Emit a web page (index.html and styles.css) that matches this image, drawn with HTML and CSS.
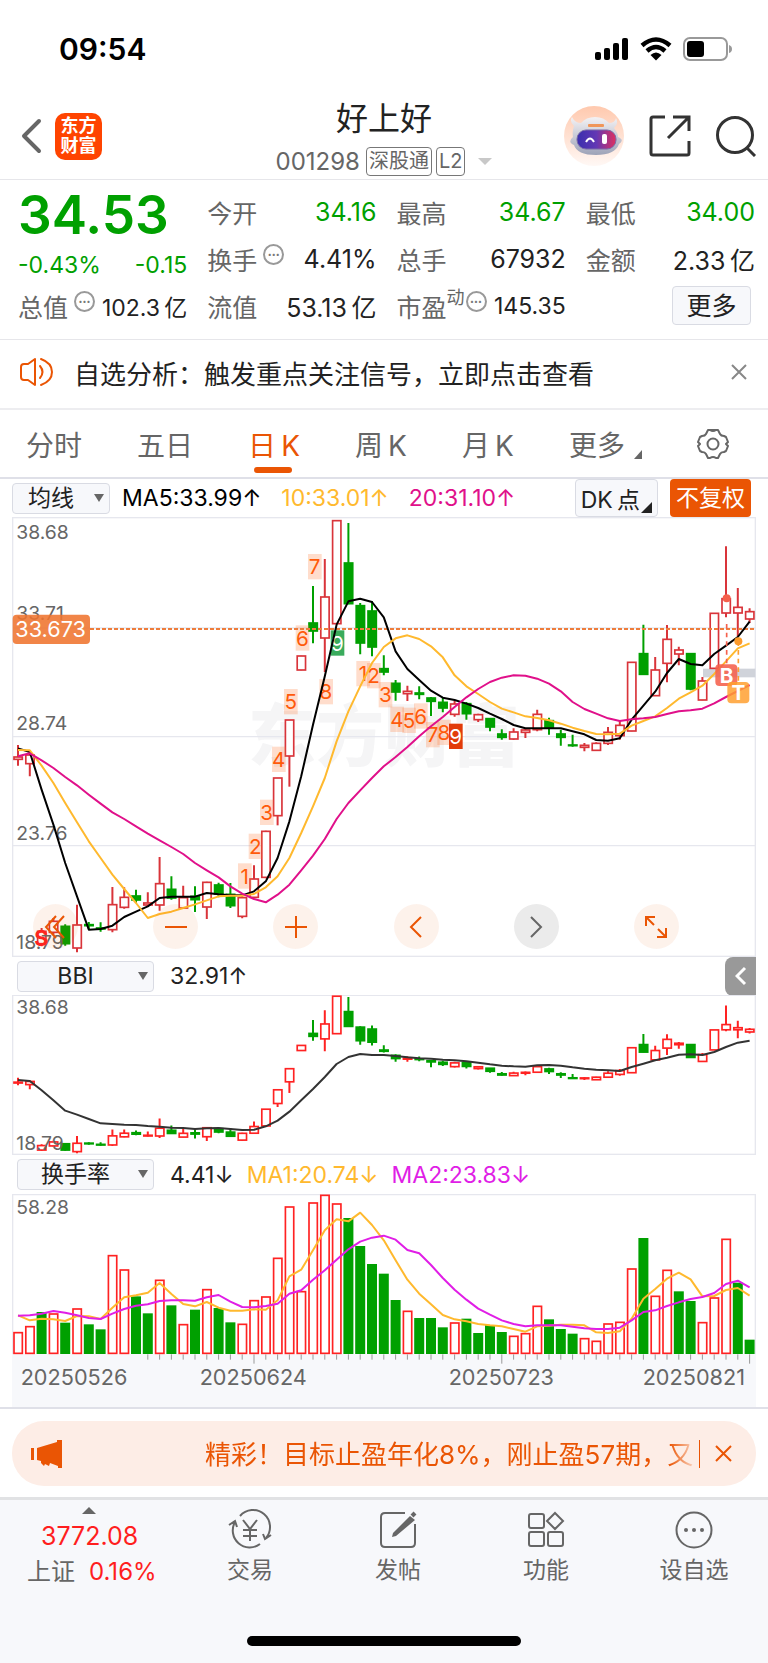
FILE: index.html
```html
<!DOCTYPE html>
<html lang="zh-CN">
<head>
    <meta charset="UTF-8">
    <meta name="viewport" content="width=device-width, initial-scale=1.0">
    <title>好上好 001298</title>
    <link rel="stylesheet" href="styles.css">
</head>
<body>

<div class="status-bar">
    <span class="time">09:54</span>
    <div class="status-icons">
        <svg width="34" height="24" viewBox="0 0 34 24"><rect x="0" y="15" width="6" height="8" rx="2"/><rect x="9" y="11" width="6" height="12" rx="2"/><rect x="18" y="6" width="6" height="17" rx="2"/><rect x="27" y="1" width="6" height="22" rx="2"/></svg>
        <svg width="32" height="24" viewBox="0 0 32 24"><g fill="none" stroke="#000" stroke-width="4.5"><path d="M2 8.500Q16 -3.500 30 8.500"/><path d="M7 14Q16 6 25 14"/></g><path d="M16 23.500L10.500 18Q16 13 21.500 18Z"/></svg>
        <svg width="50" height="24" viewBox="0 0 50 24"><rect x="1" y="1" width="43" height="22" rx="6" fill="none" stroke="#999" stroke-width="2"/><rect x="4" y="4" width="17" height="16" rx="3"/><path d="M46 8Q49 9 49 12T46 16Z" fill="#999"/></svg>
    </div>
</div>

<header class="header">
    <div class="header-left">
        <button class="icon-btn" aria-label="返回"><svg width="22" height="38" viewBox="0 0 22 38" fill="none" stroke="#666" stroke-width="4" stroke-linecap="round" stroke-linejoin="round"><path d="M19 4L4 19L19 34"/></svg></button>
        <a href="#" class="logo">东方<br>财富</a>
    </div>
    <div class="header-title">
        <h1>好上好</h1>
        <div class="code"><span>001298</span><span class="tag">深股通</span><span class="tag">L2</span><i class="tri-down"></i></div>
    </div>
    <div class="header-right">
        <button class="icon-btn" aria-label="智能助手">
            <svg width="60" height="60" viewBox="0 0 60 60">
                <defs>
                    <linearGradient id="halo" x1="0" y1="0" x2="0" y2="1"><stop offset="0" stop-color="#ffc9ae"/><stop offset="1" stop-color="#fff8f5"/></linearGradient>
                    <linearGradient id="face" x1="0" y1="0" x2="1" y2="0"><stop offset="0" stop-color="#3a2fae"/><stop offset=".5" stop-color="#6338b4"/><stop offset="1" stop-color="#e0305e"/></linearGradient>
                    <linearGradient id="head" x1="0" y1="0" x2="0" y2="1"><stop offset="0" stop-color="#f4f2f4"/><stop offset="1" stop-color="#9da3b8"/></linearGradient>
                </defs>
                <circle cx="30" cy="30" r="30" fill="url(#halo)"/>
                <path d="M10 20Q5 15 8 11Q11 17 17 17Q22 11 31 11Q40 11 45 17Q51 17 52 12Q55 18 50 22Q54 27 54 31Q61 34 55 38Q51 49 32 49Q13 49 10 39Q3 36 9 31Q8 25 10 20Z" fill="url(#head)"/>
                <rect x="13" y="24" width="39" height="19" rx="9" fill="url(#face)" stroke="#7a6ba8"/>
                <rect x="24" y="18" width="16" height="3" rx="1" fill="#f0965a"/>
                <path d="M22 36Q26 29 30 36" fill="none" stroke="#fff" stroke-width="2"/><rect x="38" y="28" width="5" height="10" rx="2" fill="#fff"/>
            </svg>
        </button>
        <button class="icon-btn" aria-label="分享"><svg width="42" height="42" viewBox="0 0 42 42" fill="none" stroke="#333" stroke-width="3"><path d="M16 2H4Q2 2 2 4V38Q2 40 4 40H38Q40 40 40 38V26M24 2H40V16M40 2L19 23"/></svg></button>
        <button class="icon-btn" aria-label="搜索"><svg width="42" height="42" viewBox="0 0 42 42" fill="none" stroke="#333" stroke-width="3"><circle cx="19" cy="20" r="17.500"/><path d="M31 33L39 41"/></svg></button>
    </div>
</header>

<section class="quote">
    <div class="price">34.53</div>
    <div class="cell"><label>今开</label><b class="green">34.16</b></div>
    <div class="cell"><label>最高</label><b class="green">34.67</b></div>
    <div class="cell"><label>最低</label><b class="green">34.00</b></div>

    <div class="cell change"><b class="green">-0.43%</b><b class="green">-0.15</b></div>
    <div class="cell"><label>换手<i class="dots">•••</i></label><b>4.41%</b></div>
    <div class="cell"><label>总手</label><b>67932</b></div>
    <div class="cell"><label>金额</label><b>2.33&thinsp;亿</b></div>

    <div class="cell"><label>总值<i class="dots">•••</i></label><b class="small">102.3&thinsp;亿</b></div>
    <div class="cell"><label>流值</label><b>53.13&thinsp;亿</b></div>
    <div class="cell"><label>市盈<sup>动</sup><i class="dots">•••</i></label><b class="small">145.35</b></div>
    <div class="cell cell-more"><button class="more-btn">更多</button></div>
</section>

<section class="notice">
    <svg width="34" height="30" viewBox="0 0 34 30" fill="none" stroke="#ea5504" stroke-width="2" stroke-linejoin="round" stroke-linecap="round"><path d="M15 2L8 7H4Q1 7 1 10V20Q1 23 4 23H8L15 28ZM20 9Q25 15 20 21M21 2Q32 6 32 15T21 28"/></svg>
    <a href="#">自选分析：触发重点关注信号，立即点击查看</a>
    <button class="icon-btn" aria-label="关闭"><svg width="16" height="16" viewBox="0 0 16 16" stroke="#888" stroke-width="2"><path d="M1 1L15 15M15 1L1 15"/></svg></button>
</section>

<nav class="tabs">
    <button>分时</button>
    <button>五日</button>
    <button class="active">日&thinsp;K</button>
    <button>周&thinsp;K</button>
    <button>月&thinsp;K</button>
    <button>更多<i class="corner"></i></button>
    <button aria-label="设置"><svg width="32" height="32" viewBox="0 0 32 32" fill="none" stroke="#666" stroke-width="2" stroke-linejoin="round"><path d="M11 2H21L23 6Q24 8 27 8L29 9L31 14L29 16L31 18L29 23L27 24Q24 24 23 26L21 30H19Q16 28 13 30H11L9 26Q8 24 5 24L3 23L1 18L3 16L1 14L3 9L5 8Q8 8 9 6L11 2H13Q16 4 19 2"/><circle cx="16" cy="16" r="5.500"/></svg></button>
</nav>

<main class="charts">
    <div class="bar bar-main">
        <span class="select"><select aria-label="主图指标"><option>均线</option></select></span>
        <span class="ma5">MA5:33.99↑</span>
        <span class="ma10">10:33.01↑</span>
        <span class="ma20">20:31.10↑</span>
        <button class="dk-btn">DK&thinsp;点<i class="corner"></i></button>
        <button class="adjust-btn">不复权</button>
    </div>

    <div class="chart-wrap">
        <svg id="kline" class="chart" viewBox="36 22 2232 1320"></svg>
        <div class="controls">
            <button aria-label="最左"><svg viewBox="0 0 24 24"><path d="M12 1L2 12L12 23M20 1L10 12L20 23"/></svg></button>
            <button aria-label="缩小"><svg viewBox="0 0 24 24"><path d="M1 12H23"/></svg></button>
            <button aria-label="放大"><svg viewBox="0 0 24 24"><path d="M1 12H23M12 1V23"/></svg></button>
            <button aria-label="左移"><svg viewBox="0 0 24 24"><path d="M17 2L7 12L17 22"/></svg></button>
            <button aria-label="右移" class="gray"><svg viewBox="0 0 24 24"><path d="M7 2L17 12L7 22"/></svg></button>
            <button aria-label="全屏"><svg viewBox="0 0 24 24"><path d="M2 11V2H11M2 2L10 10M22 13V22H13M22 22L14 14"/></svg></button>
        </div>
    </div>

    <div class="bar">
        <span class="select wide"><select aria-label="副图指标一"><option>BBI</option></select></span>
        <span>32.91↑</span>
        <button class="fold-btn" aria-label="展开"><svg width="12" height="20" viewBox="0 0 12 20" fill="none" stroke="#fff" stroke-width="3"><path d="M10 2L2 10L10 18"/></svg></button>
    </div>
    <svg id="bbi" class="chart" viewBox="36 136 2232 480"></svg>

    <div class="bar bar-volume">
        <span class="select wide"><select aria-label="副图指标二"><option>换手率</option></select></span>
        <span>4.41↓</span>
        <span class="ma10">MA1:20.74↓</span>
        <span class="violet">MA2:23.83↓</span>
    </div>
    <svg id="volume" class="chart" viewBox="36 41 2232 639"></svg>
</main>

<section class="promo">
    <div class="promo-inner">
        <svg width="32" height="28" viewBox="0 0 32 28" fill="#ea5504"><path d="M0 8H3V20H0ZM6 8L26 2V0H31V28H27V26L19 23L18 26L14 24L13 26L10 23V21L6 20Z"/></svg>
        <a href="#">精彩！目标止盈年化8%，刚止盈57期，又</a>
        <button class="icon-btn" aria-label="关闭"><svg width="17" height="17" viewBox="0 0 17 17" stroke="#ea5504" stroke-width="2"><path d="M1 1L16 16M16 1L1 16"/></svg></button>
    </div>
</section>

<footer class="footer">
    <nav class="bottom-nav">
        <a href="#" class="index">
            <i class="tri-up"></i>
            <span class="red">3772.08</span>
            <span class="index-row">上证<span class="red">0.16%</span></span>
        </a>
        <a href="#">
            <svg width="42" height="38" viewBox="0 0 42 38"><path d="M11 5A17 17 0 0 1 37 27M31 33A17 17 0 0 1 6 11M0 14L6 10L8 16M42 24L36 28L34 23M14 9L21 18L28 9M14 19H28M14 25H28M21 18V30"/></svg>
            <span>交易</span>
        </a>
        <a href="#">
            <svg width="38" height="38" viewBox="0 0 38 38"><path d="M26 2H6Q2 2 2 6V32Q2 36 6 36H32Q36 36 36 32V13"/><path d="M31 5L36 9L17 25L13 26L14 22Z" fill="#666" stroke="none"/><path d="M33 5L36 2" stroke-width="4"/></svg>
            <span>发帖</span>
        </a>
        <a href="#">
            <svg width="36" height="36" viewBox="0 0 36 36"><rect x="1" y="2" width="15" height="14" rx="2"/><rect x="1" y="20" width="15" height="14" rx="2"/><rect x="20" y="20" width="15" height="14" rx="2"/><path d="M27 1L35 9L27 17L19 9Z"/></svg>
            <span>功能</span>
        </a>
        <a href="#">
            <svg width="38" height="38" viewBox="0 0 38 38"><circle cx="19" cy="19" r="17.500"/><g fill="#666" stroke="none"><circle cx="11" cy="19" r="2"/><circle cx="19" cy="19" r="2"/><circle cx="27" cy="19" r="2"/></g></svg>
            <span>设自选</span>
        </a>
    </nav>
    <div class="home-bar"></div>
</footer>

<script src="chart.js"></script>
</body>
</html>
```
FILE: styles.css
```css
* {
    box-sizing: border-box;
}
body {
    margin: 0;
    font-family: Inter, "Noto Sans CJK SC", sans-serif;
    font-size: 25px;
    color: #222;
    background-color: #fff;
}
button {
    border: none;
    background: none;
    padding: 0;
    margin: 0;
    font: inherit;
    color: inherit;
    cursor: pointer;
}
a {
    color: inherit;
    text-decoration: none;
}
i {
    font-style: normal;
}
svg {
    display: block;
    flex: none;
}
.icon-btn {
    display: flex;
    align-items: center;
    justify-content: center;
}

/* status bar */
.status-bar {
    display: flex;
    justify-content: space-between;
    align-items: center;
    height: 98px;
    padding: 0 35px 0 59px;
}
.time {
    font-size: 30px;
    font-weight: 600;
    color: #000;
}
.status-icons {
    display: flex;
    gap: 11px;
}

/* header */
.header {
    display: grid;
    grid-template-columns: 1fr auto 1fr;
    height: 82px;
    padding: 0 10px;
    border-bottom: 1px solid #e6e6ea;
}
.header-left {
    display: flex;
    align-items: center;
    gap: 13px;
    height: 76px;
    padding-left: 10px;
}
.logo {
    width: 47px;
    height: 47px;
    padding-top: 3px;
    border-radius: 10px;
    background-color: #ff4400;
    color: #fff;
    font-size: 18px;
    font-weight: 700;
    line-height: 20px;
    text-align: center;
}
.header-title {
    text-align: center;
}
.header-title h1 {
    margin: 0;
    font-size: 32px;
    font-weight: 400;
    line-height: 42px;
}
.code {
    display: flex;
    align-items: center;
    gap: 4px;
    height: 42px;
    color: #666;
    font-size: 24px;
}
.tag {
    height: 29px;
    padding: 0 2px;
    border: 1px solid #777;
    border-radius: 4px;
    font-size: 20px;
    line-height: 27px;
}
.code .tag:nth-child(2) {
    margin-left: 2px;
}
.tri-down {
    margin-left: 9px;
    border: 7px solid transparent;
    border-top-color: #c8c8c8;
    border-bottom: none;
}
.header-right {
    display: flex;
    justify-content: flex-end;
    align-items: center;
    gap: 25px;
    height: 76px;
}

/* quote panel */
.quote {
    display: grid;
    grid-template-columns: repeat(4, 1fr);
    grid-auto-rows: 47px;
    column-gap: 20px;
    height: 160px;
    padding: 8px 13px 0 18px;
    border-bottom: 1px solid #e6e6ea;
}
.price {
    font-size: 53px;
    font-weight: 600;
    line-height: 54px;
    color: #00a000;
}
.cell {
    display: flex;
    justify-content: space-between;
    align-items: center;
    white-space: nowrap;
}
.cell label {
    display: flex;
    color: #666;
}
.cell b {
    font-weight: 400;
}
.cell b.small {
    font-size: 23px;
}
.cell sup {
    font-size: 18px;
    line-height: 20px;
}
.cell b.green {
    color: #00a000;
}
.change {
    font-size: 23px;
    padding-top: 12px;
}
.dots {
    align-self: flex-start;
    width: 21px;
    height: 21px;
    margin: 3px 0 0 6px;
    border: 2px solid #999;
    border-radius: 50%;
    color: #777;
    font-size: 7px;
    line-height: 17px;
    text-align: center;
}
sup + .dots {
    margin-left: 1px;
}
.cell-more {
    justify-content: flex-end;
}
.more-btn {
    width: 79px;
    height: 39px;
    margin-right: 4px;
    border: 1px solid #d9dbe3;
    border-radius: 4px;
    background-color: #f7f8fb;
    line-height: 30px;
}

/* notice */
.notice {
    display: flex;
    align-items: center;
    gap: 20px;
    height: 70px;
    padding: 0 21px 4px 20px;
    border-bottom: 2px solid #ededf0;
    font-size: 26px;
}
.notice a {
    flex: 1;
}

/* period tabs */
.tabs {
    display: flex;
    justify-content: space-between;
    height: 69px;
    padding: 0 39px 0 26px;
    border-bottom: 2px solid #dfe0e8;
    font-size: 28px;
    color: #666;
}
.tabs button {
    position: relative;
    display: flex;
    align-items: center;
    gap: 3px;
}
.tabs .active {
    color: #ea5504;
}
.tabs .active::after {
    content: "";
    position: absolute;
    left: 50%;
    bottom: 4px;
    width: 38px;
    height: 6px;
    margin-left: -20px;
    border-radius: 3px;
    background-color: #ea5504;
}
.corner {
    align-self: flex-end;
    border-left: 8px solid transparent;
    border-bottom: 9px solid currentColor;
}
.tabs .corner {
    margin: 0 0 18px 6px;
}

/* charts */
.charts {
    padding: 0 12px;
}
.bar {
    display: flex;
    align-items: center;
    gap: 16px;
    height: 38px;
    padding-left: 5px;
    font-size: 23px;
}
.bar-main {
    padding: 0 5px 0 0;
    gap: 12px;
}
.bar-main .ma10,
.bar-main .ma20 {
    margin-left: 8px;
}
.bar-volume {
    height: 39px;
    gap: 13px;
}
.bar-volume .select {
    margin-right: 3px;
}
.select {
    position: relative;
    width: 98px;
    height: 31px;
}
.select.wide {
    width: 137px;
}
.select select {
    appearance: none;
    width: 100%;
    height: 100%;
    padding: 0 20px 0 0;
    border: 1px solid #d9dbe3;
    border-radius: 4px;
    background-color: #f7f8fb;
    color: #222;
    font: inherit;
    line-height: 27px;
    text-align: center;
    text-align-last: center;
}
.select::after {
    content: "";
    position: absolute;
    right: 6px;
    top: 11px;
    border: 5px solid transparent;
    border-top: 8px solid #666;
    border-bottom: none;
}
.ma5 {
    color: #000;
}
.ma10 {
    color: #ffb92e;
}
.ma20 {
    color: #e0108a;
}
.violet {
    color: #e01ee6;
}
.dk-btn {
    display: flex;
    align-items: center;
    gap: 1px;
    height: 38px;
    margin-left: auto;
    padding: 0 5px;
    border: 1px solid #d9dbe3;
    border-radius: 4px;
    background-color: #f7f8fb;
}
.dk-btn .corner {
    margin-bottom: 3px;
    border-width: 0 0 11px 11px;
}
.adjust-btn {
    height: 38px;
    padding: 0 6px;
    border-radius: 4px;
    background-color: #ea5504;
    color: #fff;
    line-height: 38px;
}
.chart-wrap {
    position: relative;
}
.chart {
    width: 100%;
    height: auto;
}
.controls {
    position: absolute;
    left: 21px;
    right: 77px;
    bottom: 8px;
    display: flex;
    justify-content: space-between;
}
.controls button {
    display: flex;
    align-items: center;
    justify-content: center;
    width: 45px;
    height: 45px;
    border-radius: 50%;
    background-color: rgba(234, 85, 4, 0.08);
}
.controls svg {
    width: 24px;
    height: 24px;
    fill: none;
    stroke: #ea5504;
    stroke-width: 2;
}
.controls .gray {
    background-color: #ebebeb;
}
.controls .gray svg {
    stroke: #666;
}
.fold-btn {
    display: flex;
    align-items: center;
    justify-content: center;
    width: 31px;
    height: 39px;
    margin-left: auto;
    border-radius: 8px 0 0 8px;
    background-color: #999;
}

/* chart parts */
.frame {
    fill: none;
    stroke: #e6e7ee;
    stroke-width: 4;
}
.axis-bg {
    fill: #f7f8fb;
}
.tick {
    stroke: #999;
    stroke-width: 3;
}
.axis {
    fill: #666;
    font-size: 58px;
}
.date {
    fill: #666;
    font-size: 65px;
}
.watermark {
    fill: #f5f5f6;
    font-size: 204px;
    font-weight: 900;
    text-anchor: middle;
}
.line {
    fill: none;
    stroke-width: 6;
    stroke-linejoin: round;
}
.mark {
    fill: #ff5a0a;
    font-size: 62px;
    text-anchor: middle;
}
.mark.white {
    fill: #fff;
}
.badge {
    fill: #fff;
    font-size: 62px;
    font-weight: 700;
    text-anchor: middle;
}
.sell {
    fill: #ff2222;
    font-size: 64px;
    font-weight: 700;
    text-anchor: middle;
}
.cost {
    fill: #fff;
    font-size: 65px;
}

/* promo strip */
.promo {
    padding: 12px 12px 11px;
    border-top: 2px solid #dfe0e8;
    border-bottom: 3px solid #e1e2e4;
}
.promo-inner {
    display: flex;
    align-items: center;
    height: 65px;
    padding: 0 24px 0 19px;
    border-radius: 32px;
    background-color: #fdede6;
    color: #ea5504;
    font-size: 26px;
}
.promo-inner a {
    flex: 1;
    margin-left: 142px;
    padding-bottom: 2px;
    overflow: hidden;
    white-space: nowrap;
    -webkit-mask-image: linear-gradient(to right, #000 94%, transparent);
    mask-image: linear-gradient(to right, #000 94%, transparent);
}
.promo-inner button {
    height: 28px;
    padding-left: 15px;
    border-left: 1px solid #ea5504;
}

/* bottom navigation */
.footer {
    height: 163px;
    background-color: #f7f8fb;
    color: #666;
}
.bottom-nav {
    display: grid;
    grid-template-columns: 176px repeat(4, 1fr);
    height: 136px;
}
.bottom-nav a {
    display: flex;
    flex-direction: column;
    align-items: center;
    padding-top: 11px;
    font-size: 23px;
    line-height: 40px;
}
.bottom-nav svg {
    height: 38px;
    margin-bottom: 1px;
    overflow: visible;
    fill: none;
    stroke: #666;
    stroke-width: 2;
}
.bottom-nav .index {
    padding: 7px 0 0 14px;
    font-size: 25px;
    line-height: 35px;
    align-items: flex-start;
}
.bottom-nav .index > * {
    margin-left: 27px;
}
.bottom-nav .tri-up {
    margin: 0 0 5px 68px;
    border: 7px solid transparent;
    border-bottom-color: #666;
    border-top: none;
}
.bottom-nav .index-row {
    display: flex;
    gap: 14px;
    margin-left: 13px;
    font-size: 24px;
}
.red {
    color: #ff1e1e;
}
.home-bar {
    width: 274px;
    height: 10px;
    margin: 0 auto;
    border-radius: 5px;
    background-color: #000;
}
```
FILE: chart.js
```js
var GREEN = "#00a000";
var STEP = 35.4;

// high, body top, body bottom, low, 1 = up
var candles = [
    [706, 742, 749, 768, 1], [728, 736, 762, 800, 1], [1255, 1265, 1302, 1310, 1], [1225, 1235, 1268, 1275, 1],
    [1244, 1250, 1302, 1308, 0], [1185, 1246, 1315, 1328, 1], [1237, 1245, 1248, 1258, 0], [1238, 1255, 1258, 1266, 0],
    [1132, 1185, 1260, 1268, 1], [1133, 1163, 1193, 1197, 1], [1140, 1159, 1171, 1180, 0], [1148, 1180, 1186, 1190, 1],
    [1042, 1122, 1186, 1203, 1], [1100, 1139, 1165, 1170, 0], [1128, 1164, 1195, 1197, 1], [1130, 1160, 1170, 1207, 0],
    [1116, 1118, 1192, 1228, 1], [1119, 1126, 1153, 1163, 0], [1120, 1154, 1188, 1195, 0], [1160, 1164, 1220, 1226, 1],
    [1067, 1108, 1163, 1166, 1], [963, 965, 1103, 1106, 1], [805, 805, 918, 947, 1], [631, 631, 739, 831, 1],
    [438, 439, 481, 482, 1], [229, 340, 364, 401, 0], [148, 262, 385, 487, 1], [33, 33, 342, 342, 1],
    [40, 160, 282, 284, 0], [280, 288, 400, 434, 0], [274, 304, 412, 440, 0], [437, 477, 487, 497, 0],
    [511, 521, 547, 573, 0], [528, 545, 552, 574, 1], [530, 550, 554, 569, 0], [562, 565, 575, 619, 0],
    [565, 578, 595, 608, 0], [574, 583, 614, 621, 1], [577, 582, 612, 630, 0], [612, 615, 630, 637, 1],
    [625, 627, 652, 665, 0], [659, 673, 683, 690, 0], [656, 667, 688, 690, 1], [655, 661, 668, 685, 1],
    [600, 614, 660, 665, 1], [624, 633, 654, 675, 0], [660, 673, 683, 708, 0], [675, 706, 708, 711, 0],
    [700, 707, 713, 725, 1], [698, 701, 722, 724, 1], [652, 668, 701, 706, 1], [634, 647, 678, 690, 1],
    [457, 458, 664, 665, 1], [345, 432, 494, 496, 0], [442, 481, 558, 559, 1], [346, 389, 461, 518, 1],
    [411, 421, 433, 467, 1], [430, 432, 538, 542, 0], [502, 514, 571, 572, 1], [311, 311, 476, 476, 1],
    [110, 267, 310, 323, 1], [235, 293, 310, 380, 1], [296, 306, 328, 340, 1]
];
var ma5 = [716, 727, 840, 945, 1060, 1160, 1260, 1258, 1248, 1222, 1206, 1190, 1165, 1161, 1161, 1161, 1150, 1154, 1157, 1157, 1145, 1115, 1045, 935, 800, 645, 500, 345, 275, 267, 277, 323, 425, 478, 511, 543, 564, 571, 582, 595, 612, 628, 646, 656, 656, 656, 656, 665, 674, 691, 693, 686, 630, 588, 546, 490, 448, 463, 467, 433, 408, 382, 336];
var ma10 = [721, 722, 768, 820, 880, 938, 995, 1045, 1095, 1138, 1180, 1225, 1213, 1206, 1195, 1184, 1172, 1160, 1158, 1158, 1153, 1133, 1100, 1045, 970, 890, 805, 695, 605, 530, 460, 412, 386, 377, 388, 410, 443, 497, 530, 553, 577, 597, 608, 620, 625, 632, 642, 654, 664, 673, 674, 672, 648, 634, 620, 595, 567, 548, 528, 493, 455, 416, 401];
var ma20 = [740, 731, 752, 775, 802, 827, 855, 882, 908, 928, 950, 972, 992, 1012, 1033, 1060, 1082, 1103, 1130, 1152, 1168, 1178, 1155, 1125, 1082, 1038, 988, 928, 880, 842, 805, 770, 742, 712, 680, 650, 622, 592, 563, 538, 517, 504, 497, 498, 507, 522, 545, 577, 598, 612, 626, 634, 629, 626, 622, 613, 605, 602, 597, 581, 562, 544, 526];
var bbi = [391, 394, 422, 452, 483, 495, 508, 521, 523, 525, 526, 529, 531, 534, 535, 538, 536, 535, 538, 541, 540, 530, 513, 486, 452, 418, 382, 343, 322, 313, 316, 316, 319, 323, 326, 327, 330, 332, 335, 339, 344, 348, 350, 351, 347, 346, 348, 353, 357, 360, 362, 364, 352, 342, 332, 324, 315, 314, 316, 307, 292, 279, 273];

var volume = [456, 438, 396, 400, 428, 385, 433, 448, 225, 268, 349, 400, 299, 376, 432, 389, 327, 384, 427, 431, 360, 349, 233, 79, 333, 67, 44, 70, 114, 198, 252, 281, 360, 392, 414, 414, 442, 427, 416, 459, 435, 456, 467, 459, 377, 418, 447, 461, 474, 482, 430, 425, 265, 174, 347, 269, 334, 363, 426, 352, 176, 308, 479];
var volumeUp = "110101001100101010011111111100000100010000111000111110110011100";
var volMa1 = [405, 420, 415, 417, 422, 407, 408, 416, 382, 351, 345, 337, 308, 341, 371, 378, 365, 382, 391, 391, 387, 388, 360, 288, 268, 210, 150, 117, 123, 97, 134, 180, 240, 298, 340, 372, 404, 417, 423, 431, 435, 438, 446, 454, 438, 436, 433, 433, 435, 456, 458, 453, 415, 355, 326, 295, 277, 297, 348, 347, 329, 323, 346];
var volMa2 = [406, 405, 400, 392, 397, 405, 413, 416, 400, 386, 376, 372, 362, 360, 360, 361, 351, 344, 364, 380, 381, 377, 370, 340, 330, 298, 270, 238, 207, 184, 172, 166, 178, 209, 219, 254, 293, 328, 358, 385, 403, 420, 431, 438, 435, 435, 435, 439, 444, 446, 446, 442, 420, 395, 390, 377, 366, 356, 350, 338, 311, 301, 321];

// x, y, text, background
var marks = [
    [714, 1061, 1], [746, 972, 2], [780, 870, 3], [816, 711, 4], [852, 538, 5], [887, 347, 6], [924, 133, 7], [958, 508, 8], [992, 362, 9, "#3aab5c"],
    [1069, 454, 1], [1101, 460, 2], [1136, 517, 3], [1171, 591, 4], [1207, 594, 5], [1242, 581, 6], [1278, 637, 7], [1312, 630, 8], [1347, 642, 9, "#e23c0a"]
];

function posX(i) {
    return 54 + STEP * i;
}

function rect(x, y, w, h, attrs) {
    return `<rect x="${x}" y="${y}" width="${w}" height="${h}" ${attrs}/>`;
}

function hLine(y) {
    return `<path class="frame" d="M38 ${y}H2266"/>`;
}

function text(x, y, cls, str) {
    return `<text x="${x}" y="${y}" class="${cls}">${str}</text>`;
}

function polyline(values, color) {
    var points = values.map((y, i) => posX(i) + "," + y).join(" ");
    return `<polyline class="line" stroke="${color}" points="${points}"/>`;
}

function drawCandles(red, scale) {
    var out = "";
    candles.forEach(function (c, i) {
        var x = posX(i);
        var y = c.slice(0, 4).map(scale);
        var color = c[4] ? red : GREEN;
        out += `<path d="M${x} ${y[0]}V${y[1]}M${x} ${y[2]}V${y[3]}" stroke="${color}" stroke-width="6"/>`;
        out += rect(x - 12, y[1], 25, Math.max(y[2] - y[1], 2), `fill="${c[4] ? "#fff" : color}" stroke="${color}" stroke-width="5"`);
    });
    return out;
}

function drawKline() {
    var out = text(1152, 755, "watermark", "东方财富");
    out += rect(38, 24, 2228, 1316, 'class="frame"') + hLine(355) + hLine(681) + hLine(1008);
    out += rect(2109, 477, 157, 26, 'fill="#d0d3da"');
    out += drawCandles("#d9343a", y => y);
    out += text(49, 88, "axis", "38.68") + text(49, 332, "axis", "33.71") + text(49, 662, "axis", "28.74");
    out += text(49, 991, "axis", "23.76") + text(49, 1318, "axis", "18.79");
    marks.forEach(function (m) {
        out += rect(m[0], m[1], 41, 76, `fill="${m[3] || "rgba(255,120,50,.25)"}"`);
        out += text(m[0] + 20, m[1] + 61, m[3] ? "mark white" : "mark", m[2]);
    });
    out += '<path d="M270 358H2266" stroke="#ee7d3c" stroke-width="6" stroke-dasharray="12 6"/>';
    out += polyline(ma5, "#000") + polyline(ma10, "#ffb92e") + polyline(ma20, "#e0108a");
    out += rect(38, 315, 232, 88, 'rx="12" fill="#ef742f" fill-opacity=".88"') + text(46, 383, "cost", "33.673");
    out += text(124, 1309, "sell", "S");
    // trade points
    out += '<path d="M2180 343V464" stroke="#f5604c" stroke-width="5" stroke-dasharray="14 12"/>';
    out += '<path d="M2215 395V517" stroke="#ffa030" stroke-width="5" stroke-dasharray="14 12"/>';
    out += '<circle cx="2180" cy="266" r="12" fill="#f5604c"/><circle cx="2215" cy="395" r="12" fill="#fb9a2c"/>';
    out += rect(2146, 464, 66, 65, 'rx="12" fill="#f5604c" fill-opacity=".88"') + text(2180, 519, "badge", "B");
    out += rect(2182, 517, 66, 64, 'rx="12" fill="#ffa030" fill-opacity=".85"') + text(2215, 572, "badge", "T");
    document.getElementById("kline").innerHTML = out;
}

function drawBbi() {
    var out = rect(38, 137, 2228, 477, 'class="frame"');
    out += drawCandles("#ff2222", y => 136 + (y - 23) * 479 / 1317);
    out += text(49, 192, "axis", "38.68") + text(49, 600, "axis", "18.79");
    out += polyline(bbi, "#333");
    document.getElementById("bbi").innerHTML = out;
}

function drawVolume() {
    var out = rect(36, 521, 2232, 160, 'class="axis-bg"');
    out += '<path class="frame" d="M38 521V43H2266V521"/>';
    out += text(49, 100, "axis", "58.28");
    volume.forEach(function (y, i) {
        var x = posX(i);
        if (volumeUp[i] === "1") {
            out += rect(x - 12, y + 1, 25, 518 - y, 'fill="#fff" stroke="#ff2222" stroke-width="5"');
        } else {
            out += rect(x - 15, y - 1, 30, 522 - y, `fill="${GREEN}"`);
        }
        if (i > 10) {
            out += `<path class="tick" d="M${x} 522V${i === 20 || i === 41 || i === 62 ? 550 : 538}"/>`;
        }
    });
    out += polyline(volMa1, "#ffb92e") + polyline(volMa2, "#e01ee6");
    out += text(62, 614, "date", "20250526") + text(599, 614, "date", "20250624");
    out += text(1346, 614, "date", "20250723") + text(1928, 614, "date", "20250821");
    document.getElementById("volume").innerHTML = out;
}

drawKline();
drawBbi();
drawVolume();
```
